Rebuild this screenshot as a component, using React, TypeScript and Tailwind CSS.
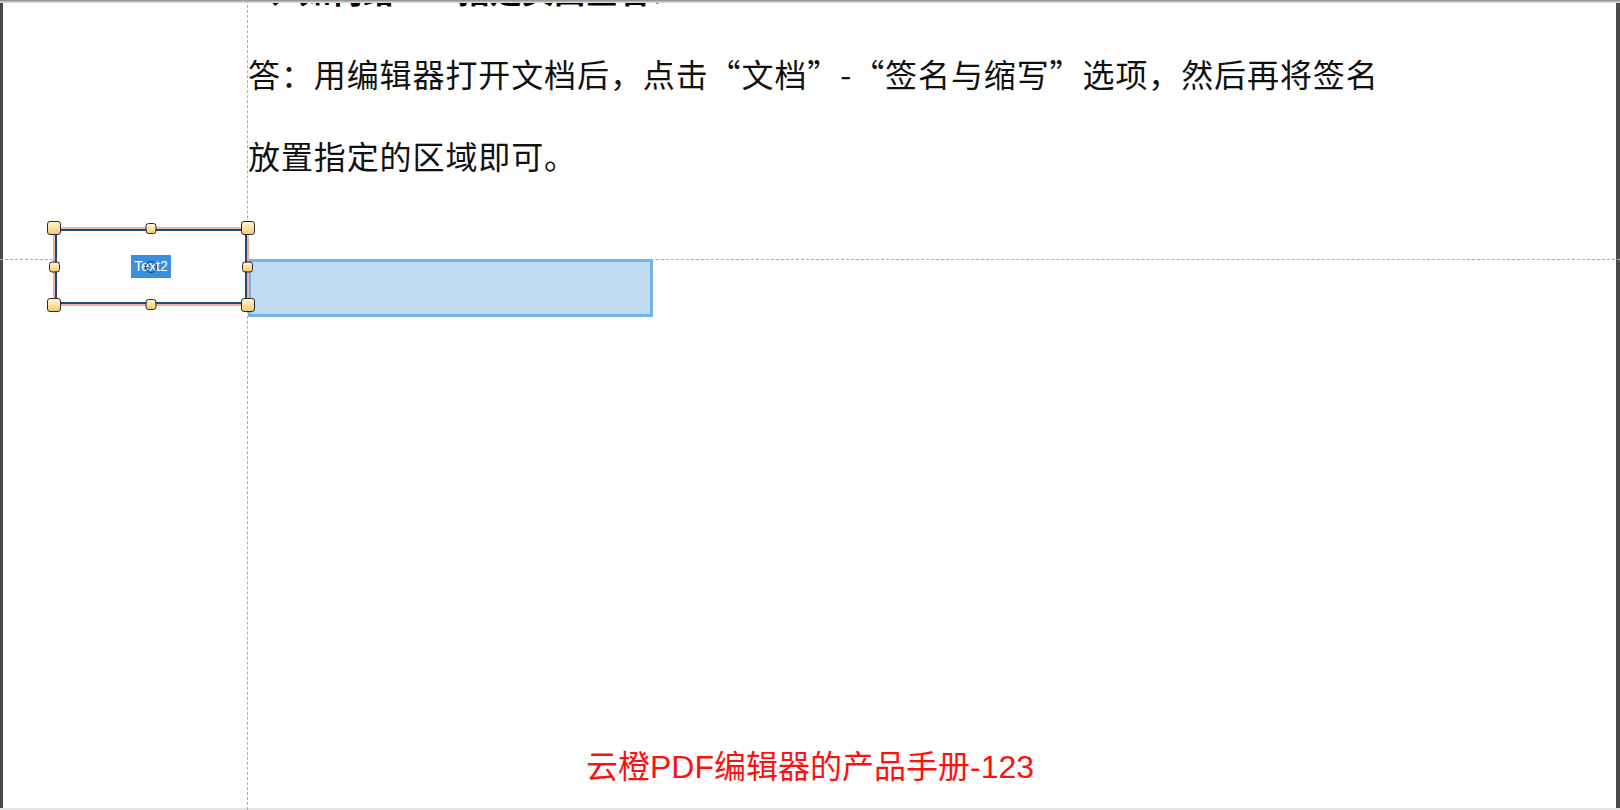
import React from "react";

const cjk = { fontFamily: '"Microsoft YaHei", "Noto Sans CJK SC", sans-serif' };
const latin = { fontFamily: '"Liberation Sans", "Noto Sans CJK SC", sans-serif' };

// resize grip of the selected field
function Handle({ className, big }: { className: string; big?: boolean }) {
    return (
        <div
            className={`absolute rounded-[3px] border border-[#2a2a2a] bg-gradient-to-b from-[#fff6d6] to-[#f3cc68] ${
                big ? "h-[14px] w-[14px]" : "h-[11px] w-[11px]"
            } ${className}`}
        />
    );
}

export default function App() {
    return (
        <div className="relative w-[1620px] h-[810px] overflow-hidden bg-white">
            {/* page frame */}
            <div className="absolute inset-y-0 left-0 w-[3px] bg-[#4a4a4a]" />
            <div className="absolute inset-y-0 right-0 w-[4px] bg-[#4a4a4a]" />
            <div className="absolute inset-x-0 top-0 h-[3px] bg-gradient-to-b from-[#8a8a8a] to-[#e8e8e8]" />
            <div className="absolute inset-x-0 bottom-0 h-[2px] bg-[#e4e4e4]" />

            {/* page content */}
            <div className="flex h-full flex-col pl-[248px]" style={cjk}>
                <div className="mt-[-27px] text-[32px] leading-[32px] font-bold text-black whitespace-nowrap">
                    4、如何给PDF指定页面签名？
                </div>
                <p className="mt-[52px] text-[32px] leading-[32px] text-[#111] tracking-[0.9px] whitespace-nowrap">
                    答：用编辑器打开文档后，点击“文档”-“签名与缩写”选项，然后再将签名
                </p>
                <p className="mt-[50px] text-[32px] leading-[32px] text-[#111] tracking-[0.9px] whitespace-nowrap">
                    放置指定的区域即可。
                </p>
                <div
                    className="mt-auto mb-[27px] -ml-[248px] text-center text-[32px] leading-[32px] text-[#ff1010]"
                    style={latin}
                >
                    云橙PDF编辑器的产品手册-123
                </div>
            </div>

            {/* guide lines */}
            <div className="absolute inset-y-0 left-[247px] border-l border-dashed border-[#7dbce9]" />
            <div className="absolute inset-x-0 top-[259px] border-t border-dashed border-[#7dbce9]" />

            {/* form field */}
            <div className="absolute left-[248px] top-[259px] w-[405px] h-[58px] border-[3px] border-[#74b3e6] bg-[#bfdcf4]" />

            {/* selected text field */}
            <div className="absolute left-[53px] top-[227px] w-[196px] h-[79px] border-[2px] border-[#f2b19c]">
                <div className="flex h-full w-full items-center justify-center border-[2px] border-[#1d4a78] bg-white">
                    <div className="relative flex h-[23px] items-center bg-[#3a8fdc] px-[3px] text-[14px] text-white" style={latin}>
                        Text2
                        <span className="absolute left-1/2 top-1/2 h-[12px] w-[12px] -translate-x-1/2 -translate-y-1/2 rounded-full border border-[#1c3f66]" />
                    </div>
                </div>
                <Handle big className="-left-[8px] -top-[8px]" />
                <Handle className="left-1/2 -top-[6px] -translate-x-1/2" />
                <Handle big className="-right-[8px] -top-[8px]" />
                <Handle className="-left-[6px] top-1/2 -translate-y-1/2" />
                <Handle className="-right-[6px] top-1/2 -translate-y-1/2" />
                <Handle big className="-left-[8px] -bottom-[8px]" />
                <Handle className="left-1/2 -bottom-[6px] -translate-x-1/2" />
                <Handle big className="-right-[8px] -bottom-[8px]" />
            </div>
        </div>
    );
}
